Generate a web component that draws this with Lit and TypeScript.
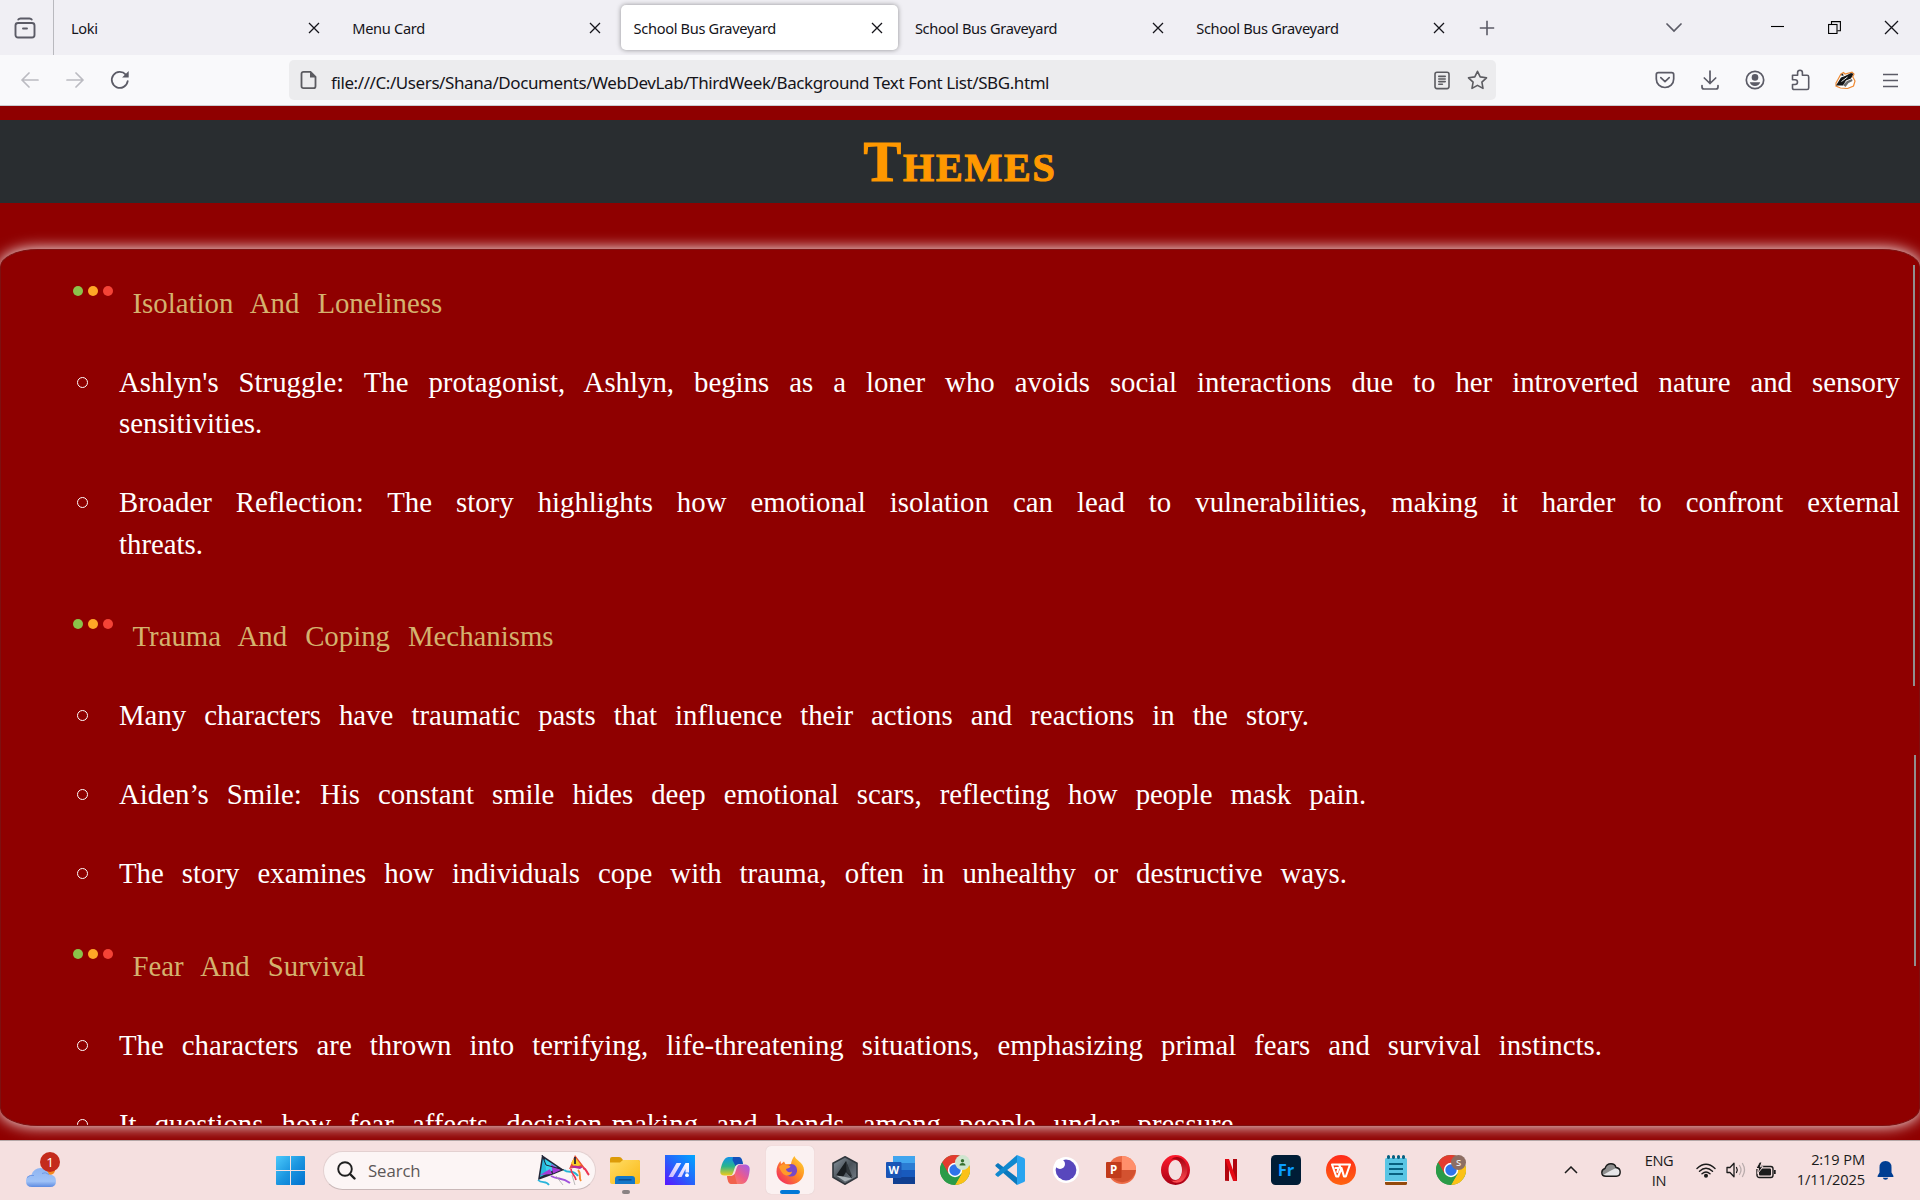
import { LitElement, html, css, svg } from "lit";
import { customElement, property } from "lit/decorators.js";

const closeX = html`<svg class="x" width="12" height="12" viewBox="0 0 12 12"><path d="M1 1l10 10M11 1L1 11" stroke="#15141a" stroke-width="1.3" fill="none"/></svg>`;

@customElement("browser-tabs")
class BrowserTabs extends LitElement {
  @property({ attribute: false }) tabs = ["Loki", "Menu Card", "School Bus Graveyard", "School Bus Graveyard", "School Bus Graveyard"];
  static styles = css`
    :host { display: flex; height: 55px; background: #f0eff4; font-family: "Noto Sans", "Open Sans", sans-serif; color: #15141a; }
    .side { width: 54px; flex: none; border-right: 1px solid #b9b9be; box-sizing: border-box; display: flex; align-items: center; padding-left: 14px; }
    .tabs { display: flex; padding-left: 4px; gap: 4.300px; align-items: center; }
    .tab { width: 277px; height: 45px; border-radius: 5px; box-sizing: border-box; display: flex; align-items: center; justify-content: space-between; padding: 0 15px 0 13px; font-size: 14.6px; letter-spacing: -0.32px; }
    .tab span { padding-top: 1px; }
    .on { background: #fff; box-shadow: 0 0 5px rgba(0,0,0,.4); }
    .plus { width: 46px; margin-left: 4px; display: flex; align-items: center; justify-content: center; padding-top: 1px; }
    .grow { flex: 1; }
    .win { width: 57px; display: flex; align-items: center; justify-content: center; padding-bottom: 1px; }
    .all { width: 45px; display: flex; align-items: center; justify-content: center; margin-right: 53px; }
  `;
  render() {
    return html`
      <div class="side"><svg width="22" height="22" viewBox="0 0 22 22" fill="none" stroke="#5b5b66" stroke-width="1.9" stroke-linecap="round"><rect x="1.5" y="6" width="19" height="14.5" rx="2.5"/><path d="M4.3 2.6Q5 1.5 6.5 1.5h9Q17 1.5 17.7 2.6M9 11.5h4"/></svg></div>
      <div class="tabs">${this.tabs.map((t, i) => html`<div class="tab ${i === 2 ? "on" : ""}"><span>${t}</span>${closeX}</div>`)}</div>
      <div class="plus"><svg width="16" height="16" viewBox="0 0 16 16"><path d="M8 .8v14.4M.8 8h14.4" stroke="#5b5b66" stroke-width="1.6"/></svg></div>
      <div class="grow"></div>
      <div class="all"><svg width="16" height="10" viewBox="0 0 16 10"><path d="M1 1l7 7 7-7" stroke="#5b5b66" stroke-width="1.7" fill="none" stroke-linecap="round"/></svg></div>
      <div class="win"><svg width="13" height="13" viewBox="0 0 13 13"><path d="M0 5.5h13" stroke="#000" stroke-width="1.1"/></svg></div>
      <div class="win"><svg width="13" height="13" viewBox="0 0 13 13" fill="none" stroke="#000" stroke-width="1.1"><rect x=".6" y="3.5" width="8.4" height="9" /><path d="M3.5 3V.6h8.9v9.2H9.4"/></svg></div>
      <div class="win"><svg width="15" height="15" viewBox="0 0 15 15"><path d="M1 1l13 13M14 1L1 14" stroke="#15141a" stroke-width="1.3"/></svg></div>`;
  }
}

@customElement("browser-toolbar")
class BrowserToolbar extends LitElement {
  static styles = css`
    :host { display: flex; height: 51px; box-sizing: border-box; border-bottom: 1px solid #cbcbcf; background: #f9f9fb; align-items: center; padding: 0 7.500px 0 7px; font-family: "Noto Sans", "Open Sans", sans-serif; }
    .cell { width: 45px; display: flex; align-items: center; justify-content: center; }
    .url { margin-left: 147px; width: 1207px; height: 40px; border-radius: 5px; background: #ececee; display: flex; align-items: center; box-sizing: border-box; padding: 0 8px 0 11px; color: #15141a; font-size: 17px; letter-spacing: -0.410px; }
    .addr { margin-left: 13px; flex: 1; padding-top: 4px; white-space: pre; }
    .star { margin-left: 17px; }
    .grow { flex: 1; }
    svg { display: block; }
  `;
  render() {
    return html`
      <div class="cell"><svg width="18" height="16" viewBox="0 0 18 16" fill="none" stroke="#bbbbc1" stroke-width="1.7" stroke-linecap="round" stroke-linejoin="round"><path d="M17 8H1M8 1L1 8l7 7"/></svg></div>
      <div class="cell"><svg width="18" height="16" viewBox="0 0 18 16" fill="none" stroke="#bbbbc1" stroke-width="1.7" stroke-linecap="round" stroke-linejoin="round"><path d="M1 8h16M10 1l7 7-7 7"/></svg></div>
      <div class="cell"><svg width="20" height="20" viewBox="0 0 20 20"><path d="M17.7 11.2A8 8 0 1 1 15.8 4.6" fill="none" stroke="#5b5b66" stroke-width="1.8" stroke-linecap="round"/><path d="M18.7 1v6.6h-6.6z" fill="#5b5b66"/></svg></div>
      <div class="url">
        <svg width="18" height="20" viewBox="0 0 18 20"><path d="M3.5 1.8h7l5 5v9.4q0 2-2 2h-10q-2 0-2-2V3.8q0-2 2-2z" fill="none" stroke="#5b5b60" stroke-width="1.8"/><path d="M10 1.2l6.2 6.2H10z" fill="#5b5b60"/></svg>
        <span class="addr">file:///C:/Users/Shana/Documents/WebDevLab/ThirdWeek/Background Text Font List/SBG.html</span>
        <svg width="16" height="19" viewBox="0 0 16 19" fill="none" stroke="#5b5b60" stroke-width="1.6" stroke-linecap="round"><rect x="1" y="1.2" width="14" height="16.4" rx="2"/><path d="M4.8 5.4h6.4M4.8 8h6.4M4.8 10.6h6.4M4.8 13.2h3.6"/></svg>
        <svg class="star" width="21" height="20" viewBox="0 0 21 20" fill="none" stroke="#5b5b60" stroke-width="1.6" stroke-linejoin="round"><path d="M10.5 1.3l2.7 5.6 6.3.9-4.6 4.3 1.1 6.3-5.5-3-5.5 3 1.1-6.3L1.500 7.800l6.300-.9z"/></svg>
      </div>
      <div class="grow"></div>
      <div class="cell"><svg width="20" height="18" viewBox="0 0 20 18" fill="none" stroke="#5b5b66" stroke-width="1.7" stroke-linecap="round" stroke-linejoin="round"><path d="M3.300 1.700h13.400q2 0 2 2V8c0 5-4 8.500-8.700 8.500S1.300 13 1.300 8V3.700q0-2 2-2z"/><path d="M5.800 6.600l4.200 4 4.200-4"/></svg></div>
      <div class="cell"><svg width="18" height="20" viewBox="0 0 18 20" fill="none" stroke="#5b5b66" stroke-width="1.700" stroke-linecap="round" stroke-linejoin="round"><path d="M9 1v12.500M3.300 8L9 13.500 14.700 8M1 15.500v1.500q0 2 2 2h12q2 0 2-2v-1.500"/></svg></div>
      <div class="cell"><svg width="20" height="20" viewBox="0 0 20 20"><circle cx="10" cy="10" r="8.700" fill="none" stroke="#5b5b66" stroke-width="1.700"/><circle cx="10" cy="7.400" r="3.300" fill="#5b5b66"/><path d="M4.800 12.300h10.400c-.6 2.500-2.700 3.600-5.200 3.600s-4.600-1.100-5.200-3.600z" fill="#5b5b66"/></svg></div>
      <div class="cell"><svg width="19" height="22" viewBox="0 0 19 22" fill="none" stroke="#5b5b66" stroke-width="1.600" stroke-linejoin="round"><path d="M6.600 6.300V3.600a2.400 2.400 0 0 1 4.800 0v2.700h4.700q1.600 0 1.600 1.600v11q0 1.600-1.600 1.600H3.100q-1.600 0-1.600-1.600v-3.400h2.600a2.400 2.400 0 0 0 0-4.800H1.500V6.300z"/></svg></div>
      <div class="cell"><svg width="21" height="18" viewBox="0 0 21 18"><path d="M1 12L6 3l2.500-1.500L10 3l7-1.800 2 2-1.300 2.600L20 10l-1.500 5-6 2.500-7-.5-4.500-2z" fill="#fff" stroke="#ef8a33" stroke-width="1.200"/><path d="M1 14.500L6 6.500l4-1.500 6-3 2.500.8L16 7.500l-5 2-3 5z" fill="#161616"/><path d="M8 14l4-4 5-2 .5 2-4 2-3 4z" fill="#6c6c6c"/><path d="M5.500 4l2.500-1.500.6 2.600z" fill="#222"/><path d="M6.500 10.500l6-4.500" stroke="#fff" stroke-width=".9"/></svg></div>
      <div class="cell"><svg width="15" height="15" viewBox="0 0 15 15"><path d="M0 1.500h15M0 7.500h15M0 13.500h15" stroke="#5b5b66" stroke-width="1.500"/></svg></div>`;
  }
}

interface Theme { title: string; points: string[]; }

@customElement("themes-page")
class ThemesPage extends LitElement {
  @property({ attribute: false }) themes: Theme[] = [
    { title: "Isolation And Loneliness", points: [
      "Ashlyn's Struggle: The protagonist, Ashlyn, begins as a loner who avoids social interactions due to her introverted nature and sensory sensitivities.",
      "Broader Reflection: The story highlights how emotional isolation can lead to vulnerabilities, making it harder to confront external threats."] },
    { title: "Trauma And Coping Mechanisms", points: [
      "Many characters have traumatic pasts that influence their actions and reactions in the story.",
      "Aiden’s Smile: His constant smile hides deep emotional scars, reflecting how people mask pain.",
      "The story examines how individuals cope with trauma, often in unhealthy or destructive ways."] },
    { title: "Fear And Survival", points: [
      "The characters are thrown into terrifying, life-threatening situations, emphasizing primal fears and survival instincts.",
      "It questions how fear affects decision-making and bonds among people under pressure."] },
  ];
  static styles = css`
    :host { display: flex; flex-direction: column; height: 1034px; background: #8f0000; overflow: hidden; position: relative; padding-top: 14px; box-sizing: border-box; font-family: "Liberation Serif", "Times New Roman", serif; }
    h1 { margin: 0; height: 83px; flex: none; background: #292d30; color: #ff9800; text-align: center; font-size: 56.500px; line-height: 85px; font-variant: small-caps; letter-spacing: 1.800px; -webkit-text-stroke: 1.100px #ff9800; }
    .box { margin-top: 46px; height: 877px; flex: none; box-sizing: border-box; border: 1px solid #7d1010; border-radius: 38px / 18px; box-shadow: 0 0 15px #fff; overflow: hidden; padding: 32px 19px 0 71.500px; font-size: 28.8px; line-height: 41.2px; word-spacing: 10.850px; background: #8f0000; }
    .theme { margin-bottom: 51.4px; }
    .head { display: flex; color: #d4b26e; margin-bottom: 38px; }
    .head b { font-weight: normal; padding-top: 1px; margin-bottom: -1px; }
    .dots { display: flex; gap: 5px; width: 60px; padding-top: 3.500px; height: 10px; }
    .dots i { width: 10px; height: 10px; border-radius: 50%; }
    .g { background: #8bc34a; } .o { background: #ffa726; } .r { background: #f44336; }
    ul { list-style: none; margin: 0; padding: 0; display: flex; flex-direction: column; gap: 37.8px; color: #fff; }
    li { display: flex; padding-left: 4.500px; }
    .mark { width: 11px; height: 11px; border: 1.2px solid #fff; border-radius: 50%; box-sizing: border-box; margin: 16px 31px 0 0; flex: none; }
    p { margin: 0 0 -1px; padding-top: 1px; flex: 1; text-align: justify; }
    .bar { position: absolute; width: 2px; background: #918e8e; }
    .inner { left: 1913px; top: 159px; height: 421px; }
    .outer { left: 1914px; top: 649px; height: 211px; }
  `;
  render() {
    return html`
      <h1>Themes</h1>
      <div class="box">
        ${this.themes.map(t => html`<section class="theme">
          <div class="head"><span class="dots"><i class="g"></i><i class="o"></i><i class="r"></i></span><b>${t.title}</b></div>
          <ul>${t.points.map(p => html`<li><span class="mark"></span><p>${p}</p></li>`)}</ul>
        </section>`)}
      </div>
      <div class="bar inner"></div><div class="bar outer"></div>`;
  }
}

const chrome = (badge: unknown) => html`<svg width="30" height="30" viewBox="0 0 30 30"><circle cx="15" cy="15" r="15" fill="#2b9b48"/><path d="M15 15L2 7.500A15 15 0 0 1 28 7.500H15z" fill="#e33b2e"/><path d="M15 7.500h13A15 15 0 0 1 15 30l6.500-11.200z" fill="#fbc116"/><path d="M2 7.500l6.500 11.300L15 7.500z" fill="#e33b2e"/><path d="M2 7.500A15 15 0 0 0 15 30l6.500-11.200H8.500z" fill="#2b9b48"/><circle cx="15" cy="15" r="7.200" fill="#fff"/><circle cx="15" cy="15" r="5.700" fill="#2f74ea"/>${badge}</svg>`;

const apps = [
  html`<svg width="30" height="27" viewBox="0 0 30 27"><defs><linearGradient id="fo" x1="0" y1="0" x2="1" y2="1"><stop stop-color="#ffdc66"/><stop offset="1" stop-color="#fbb914"/></linearGradient></defs><path d="M0 2q0-2 2-2h7q1.500 0 2.200.8L13 3h15q2 0 2 2v4H0z" fill="#dd9b08"/><path d="M0 5.500h10l3-2.500h15q2 0 2 2v20q0 2-2 2H2q-2 0-2-2z" fill="url(#fo)"/><path d="M5 27v-5q0-3 3-3h14q3 0 3 3v5z" fill="#1277c8"/><path d="M8.500 22.800h13" stroke="#0a4b8c" stroke-width="1.400"/></svg>`,
  html`<svg width="30" height="30" viewBox="0 0 30 30"><defs><linearGradient id="ma" x1="0" y1="1" x2="1" y2="0"><stop stop-color="#5a14ff"/><stop offset=".5" stop-color="#2565fb"/><stop offset="1" stop-color="#00a7ff"/></linearGradient><linearGradient id="mb" x1="0" y1="1" x2="1" y2="0"><stop stop-color="#c8b7ff"/><stop offset="1" stop-color="#fff"/></linearGradient></defs><path d="M0 0h30v30H0z" fill="url(#ma)"/><path d="M3.500 22L11.500 8h4.800L8 22zM12.500 22l8-14H24v9.500h-3.500V14L16.500 22z" fill="url(#mb)"/><circle cx="22" cy="20.200" r="1.900" fill="#fff"/></svg>`,
  html`<svg width="30" height="27" viewBox="0 0 30 27"><defs><linearGradient id="ca" x1="0" y1="0" x2="0" y2="1"><stop stop-color="#1292ea"/><stop offset=".5" stop-color="#29b58c"/><stop offset="1" stop-color="#f1cb19"/></linearGradient><linearGradient id="cb" x1="1" y1="0" x2="0" y2="1"><stop stop-color="#a05cf0"/><stop offset=".5" stop-color="#ee5d87"/><stop offset="1" stop-color="#ff9351"/></linearGradient></defs><path d="M8.500 0h10q2.500 0 3.500 3l1 4h-4q-3 0-4 3l-2 6q-.8 2.500-3 2.500H4.500Q0 18.500.3 14.500C1 9 3.500 0 8.500 0z" fill="url(#ca)"/><path d="M13 0h5.500q2.500 0 3.500 3l1 4h-4q-2.500 0-3.500 2L12.500 3z" fill="#1550ba"/><path d="M21.500 27h-10q-2.500 0-3.500-3l-1-5h4q3 0 4-3l2-6q.8-2.500 3-2.500h6Q30 8.500 29.700 12.500 28.500 27 21.500 27z" fill="url(#cb)"/><path d="M17 27h-5.500Q9 27 8 24l-1-5h4q2.500 0 3.500-2z" fill="#f1624c"/></svg>`,
  html`<svg width="29" height="29" viewBox="0 0 29 29"><defs><linearGradient id="fa" x1="1" y1="0" x2="0" y2="1"><stop stop-color="#ffe136"/><stop offset=".45" stop-color="#ff8a22"/><stop offset="1" stop-color="#f0196e"/></linearGradient></defs><path d="M18.500 0c.5 3 6 5.500 8 9 2 3 2 7.500.8 10.500C25.300 25 20.500 28.500 14.500 28.500 7 28.500.5 23 .5 15.500.5 11 2 8 4.500 5L5 8l3-2.500 1.500 2.800q3-.5 5.500-.2C15.500 5 16.500 2 18.500 0z" fill="url(#fa)"/><path d="M10 11.500l5-3.500c4 0 6.500 3.500 6 7.500-.5 3.500-3.500 5.500-7 5-3-.5-5.500-3-5-6z" fill="#7849c8"/><path d="M3 11c3-4 6-3 7.500-1.500l4 .5c-.5 2-2.500 2-4.500 3 0 3 4 4 6 2.500 0 3-4 5-7 3.500C6 18 4.500 14 3 11z" fill="#ff9a2a"/></svg>`,
  html`<svg width="26" height="29" viewBox="0 0 26 29"><defs><linearGradient id="ar" x1="0" y1="0" x2="1" y2="1"><stop stop-color="#8d98a2"/><stop offset=".5" stop-color="#4a525a"/><stop offset="1" stop-color="#7c858e"/></linearGradient></defs><path d="M13 .8l12 6.500v14L13 28.200 1 21.300v-14z" fill="url(#ar)" stroke="#30363c" stroke-width="1.600"/><path d="M14 5L4 19.500l7 1.500 3-5 6 6.500z" fill="#191d21"/><path d="M14 5l6.500 16-6-5z" fill="#30363b"/><path d="M4 19.500l9 6 7-3-9-2z" fill="#a8b0b6"/></svg>`,
  html`<svg width="29" height="28" viewBox="0 0 29 28"><path d="M7 0h22v7H7z" fill="#41a5ee"/><path d="M7 7h22v7H7z" fill="#2b7cd3"/><path d="M7 14h22v7H7z" fill="#185abd"/><path d="M7 21h22v7H7z" fill="#103f91"/><rect y="6" width="15.500" height="16" rx="1" fill="#1a55b6"/><text x="7.700" y="18" font-family="Open Sans, sans-serif" font-weight="700" font-size="11" text-anchor="middle" fill="#fff">W</text></svg>`,
  chrome(svg`<circle cx="22.500" cy="7.500" r="7.500" fill="#cfe5cf"/><circle cx="22.500" cy="5.800" r="1.700" fill="#36702f"/><path d="M19.500 10.500q0-2.500 3-2.500t3 2.500z" fill="#36702f"/>`),
  html`<svg width="30" height="30" viewBox="0 0 30 30"><path d="M1 9.500l2-1.500L22 22.500V30L.8 11.500Q-.3 10.500 1 9.500z" fill="#0a78bd"/><path d="M1 20.500l2 1.500L22 7.500V0L.8 18.500q-1.100 1 .2 2z" fill="#1089cf"/><path d="M22 0l7 3q1 .5 1 1.500v21q0 1-1 1.500l-7 3z" fill="#29a4f0"/></svg>`,
  html`<svg width="26" height="26" viewBox="0 0 26 26"><circle cx="13" cy="13" r="13" fill="#fff"/><circle cx="13" cy="13" r="10.400" fill="#5847bd"/><circle cx="7" cy="7" r="5" fill="#fff"/></svg>`,
  html`<svg width="30" height="28" viewBox="0 0 30 28"><circle cx="16" cy="14" r="14" fill="#ed6c47"/><path d="M16 0a14 14 0 0 1 14 14H16z" fill="#ff8f6b"/><path d="M2.500 14H30a14 14 0 0 1-27 3z" fill="#d35230"/><rect y="6" width="15.500" height="16" rx="1" fill="#c13b1b"/><text x="7.700" y="18" font-family="Open Sans, sans-serif" font-weight="700" font-size="11.500" text-anchor="middle" fill="#fff">P</text></svg>`,
  html`<svg width="29" height="30" viewBox="0 0 29 30"><defs><linearGradient id="op" x1="0" y1="0" x2="0" y2="1"><stop stop-color="#ff1b2d"/><stop offset="1" stop-color="#a70014"/></linearGradient><linearGradient id="oq" x1="0" y1="0" x2="0" y2="1"><stop stop-color="#a3000f"/><stop offset="1" stop-color="#ff4e52"/></linearGradient></defs><path fill-rule="evenodd" d="M14.500 0a14.500 15 0 1 0 0 30 14.500 15 0 1 0 0-30zm0 5c4 0 6.500 4.500 6.500 10s-2.500 10-6.500 10S7.500 20.500 7.500 15s3-10 7-10z" fill="url(#op)"/><path d="M10 4.800C14 .5 19 2 22 4.500a15 15 0 0 1 0 21c-4 3-9 3-12-.3 6.500 2.500 11.300-3 11.300-10.200S16.500 2.300 10 4.800z" fill="url(#oq)"/></svg>`,
  html`<svg width="12" height="22" viewBox="0 0 12 22"><path d="M0 0h4v22l-4-.3zM8 0h4v22l-4-.3z" fill="#b1060f"/><path d="M0 0h4l8 22-4-.3z" fill="#e50914"/></svg>`,
  html`<svg width="30" height="30" viewBox="0 0 30 30"><rect width="30" height="30" rx="4.500" fill="#001d36"/><text x="15" y="21" font-family="Open Sans, sans-serif" font-weight="700" font-size="16.500" text-anchor="middle" fill="#0a9dff">Fr</text></svg>`,
  html`<svg width="30" height="30" viewBox="0 0 30 30"><defs><linearGradient id="wp" x1="0" y1="0" x2="0" y2="1"><stop stop-color="#ff2a1a"/><stop offset="1" stop-color="#ff6410"/></linearGradient></defs><circle cx="15" cy="15" r="15" fill="url(#wp)"/><path d="M14.500 13l-1.500-3.500H6l4.200 12h2L15.500 13l2.500 8.500h1.800L24 9.500H13.500M9.500 13h3l-1.200 4" fill="none" stroke="#fff" stroke-width="2.100" stroke-linejoin="round" stroke-linecap="round"/></svg>`,
  html`<svg width="22" height="30" viewBox="0 0 22 30"><path d="M0 25h22v3.500q0 1.500-1.500 1.500h-19Q0 30 0 28.500z" fill="#944a0c"/><path d="M0 24h22v3H0z" fill="#f3f3f3"/><path d="M0 4.500Q0 3 1.500 3h19Q22 3 22 4.500V26H0z" fill="#5ac5e4"/><path d="M4 9h14M4 14h14M4 19h14" stroke="#086080" stroke-width="2"/><path d="M3.500 1.500v1M8.500 1.500v1M13.500 1.500v1M18.500 1.500v1" stroke="#086080" stroke-width="3" stroke-linecap="round"/></svg>`,
  chrome(svg`<circle cx="22.500" cy="7.500" r="7.500" fill="#8d6e63"/><text x="22.500" y="11" font-family="Open Sans, sans-serif" font-size="9.500" font-weight="600" text-anchor="middle" fill="#eee">S</text>`),
];

@customElement("task-bar")
class TaskBar extends LitElement {
  static styles = css`
    :host { display: flex; height: 60px; box-sizing: border-box; border-top: 1px solid #b5a8a8; padding-bottom: 1px; background: #f5e0e0; align-items: center; font-family: "Open Sans", "Noto Sans", sans-serif; color: #1b1b1b; }
    svg { display: block; }
    .weather { width: 276px; padding-left: 26px; box-sizing: border-box; flex: none; }
    .pill { margin-left: 18px; width: 273px; height: 39px; border-radius: 20px; background: #fcf5f5; border: 1px solid #e3d0d0; border-bottom-color: #c9b8b8; box-sizing: border-box; display: flex; align-items: center; padding: 0 5px 0 13px; }
    .pill span { margin-left: 12px; flex: 1; font-size: 16.8px; letter-spacing: -0.1px; color: #5c5757; }
    .apps { display: flex; margin-left: 1.500px; }
    .app { width: 55.070px; display: flex; align-items: center; justify-content: center; height: 58px; position: relative; }
    .act { position: absolute; left: 3.500px; top: 5px; width: 48px; height: 48px; border-radius: 5px; background: #fbf1f1; box-shadow: 0 0 1px #d0bcbc; }
    .app svg { position: relative; }
    .run { position: absolute; bottom: 5px; left: 24px; width: 8px; height: 4px; border-radius: 2px; background: #8a8283; }
    .cur { position: absolute; bottom: 5px; left: 17.500px; width: 20px; height: 4px; border-radius: 2px; background: #0078d7; }
    .tray { margin-left: auto; display: flex; align-items: center; padding-right: 26.500px; }
    .up { margin-right: 23px; } .cloud { margin-right: 22px; }
    .lang { width: 32px; text-align: center; font-size: 14.600px; line-height: 20px; letter-spacing: -0.4px; margin: -1px 21px 0 0; }
    .wifi { margin-right: 10px; } .vol { margin-right: 10px; }
    .time { width: 89px; text-align: right; font-size: 14.600px; line-height: 20px; letter-spacing: -0.100px; margin: -2px 11.500px 0 0; white-space: nowrap; }
  `;
  render() {
    return html`
      <div class="weather"><svg width="36" height="36" viewBox="0 0 36 36"><defs><linearGradient id="cl" x1="0" y1="0" x2="0" y2="1"><stop stop-color="#8fb4f0"/><stop offset=".7" stop-color="#9fc2f7"/><stop offset="1" stop-color="#5d8ae0"/></linearGradient></defs><g transform="translate(0 -3)"><circle cx="24" cy="21" r="5" fill="#f58a1e"/><path d="M6 38q-6 0-6-6 0-5.500 5.500-6.300Q8 19 14.500 19q6 0 8.500 6.500 7 0 7 6.500 0 6-6 6z" fill="url(#cl)"/><path d="M1 28.500q3-3 7-2M16 24.500q3-2 7 1" stroke="#7199e4" fill="none"/></g><circle cx="24" cy="10" r="10" fill="#c42b1c"/><text x="24" y="15" font-family="Open Sans, sans-serif" font-size="13.500" text-anchor="middle" fill="#fff">1</text></svg></div>
      <svg width="29" height="29" viewBox="0 0 29 29"><defs><linearGradient id="wl" gradientUnits="userSpaceOnUse" x1="0" y1="0" x2="29" y2="29"><stop stop-color="#4cc9fb"/><stop offset=".5" stop-color="#1b96e0"/><stop offset="1" stop-color="#0070cf"/></linearGradient></defs><path d="M1 0h13v14H0V1q0-1 1-1zM15 0h13q1 0 1 1v13H15zM0 15h14v14H1q-1 0-1-1zM15 15h14v13q0 1-1 1H15z" fill="url(#wl)"/></svg>
      <div class="pill">
        <svg width="19" height="19" viewBox="0 0 19 19" fill="none" stroke="#1f1f1f" stroke-linecap="round"><circle cx="8" cy="8" r="6.800" stroke-width="1.900"/><path d="M13 13l4.500 4.500" stroke-width="2.400"/></svg>
        <span>Search</span>
        <svg width="53" height="32" viewBox="0 0 53 32"><path d="M5 1L27 16 16 20.500 1 26z" fill="#222638"/><path d="M6 4l7 8-4 8-6 3z" fill="#27b9dc"/><path d="M8 5l12 8-8 6-3-3z" fill="#37d4ee"/><path d="M14 10l10 6-8 3.500zM3 21l10-6 2 5z" fill="#a63bd8"/><path d="M5 1l4 10 18 5" stroke="#222638" stroke-width="1" fill="none"/><path d="M1 26c4 4 8 0 11 5" stroke="#28b4da" stroke-width="1.700" fill="none"/><path d="M14 22c7 4 11 1 19 7" stroke="#a050dc" stroke-width="2" fill="none"/><path d="M27 16c5 4 9-1 14 6" stroke="#25b5d5" stroke-width="2" fill="none"/><path d="M19 22l7 9M35 21l3 10" stroke="#aaa" stroke-width=".8"/><path d="M38 1l10 13-7-1-9 2z" fill="#eb4d35"/><path d="M38 3l6 8-6 2-4-4z" fill="#f9cd28"/><path d="M38 3v7" stroke="#2a2438" stroke-width="1.800"/><path d="M33 13l5-1.500 8 1.500-3 2z" fill="#b52aa2"/><path d="M46 14c4 1 3 4 6 7" stroke="#ec3553" stroke-width="2" fill="none"/><path d="M41 16c4 4 0 7 3 11" stroke="#f58b2c" stroke-width="2" fill="none"/><path d="M34 15c0 5 4 6 5 11" stroke="#ec3553" stroke-width="1.700" fill="none"/></svg>
      </div>
      <div class="apps">${apps.map((a, i) => html`<div class="app">${i === 3 ? html`<div class="act"></div>` : ""}${a}${i === 0 ? html`<div class="run"></div>` : ""}${i === 3 ? html`<div class="cur"></div>` : ""}</div>`)}</div>
      <div class="tray">
        <svg class="up" width="14" height="8" viewBox="0 0 14 8"><path d="M1 7l6-6 6 6" fill="none" stroke="#1b1b1b" stroke-width="1.500"/></svg>
        <svg class="cloud" width="20" height="14" viewBox="0 0 20 14"><path d="M5 13.200q-4.200 0-4.200-3.800 0-3 3.200-3.900Q5.500.8 10 .8q4 0 5 3.700 4.200.5 4.200 4.500 0 4.200-4 4.200z" fill="#8e8e8e"/><path d="M2 12l7-4 6-3 3.500 2 .5 3-2.500 3H5z" fill="#e6e6e8"/><path d="M5 13.200q-4.200 0-4.200-3.800 0-3 3.200-3.900Q5.500.8 10 .8q4 0 5 3.700 4.200.5 4.200 4.500 0 4.200-4 4.200z" fill="none" stroke="#1b1b1b" stroke-width="1.400"/></svg>
        <div class="lang">ENG<br>IN</div>
        <svg class="wifi" width="20" height="15" viewBox="0 0 20 15" fill="none" stroke="#1b1b1b" stroke-width="1.400" stroke-linecap="round"><path d="M1 5.500q9-8.500 18 0M3.500 8.200q6.500-6 13 0M6 10.700q4-3.600 8 0"/><circle cx="10" cy="12.800" r="1.300" fill="#1b1b1b"/></svg>
        <svg class="vol" width="20" height="16" viewBox="0 0 20 16" fill="none" stroke-width="1.300" stroke-linecap="round"><path d="M1 5.500h3L8 1.200v13.600L4 10.500H1z" stroke="#1b1b1b" stroke-linejoin="round"/><path d="M10.500 5.500q1.600 2.500 0 5" stroke="#1b1b1b"/><path d="M13.500 3.500q3 4.500 0 9M16.500 1.500q4 6.500 0 13" stroke="#b9acac"/></svg>
        <svg width="20" height="17" viewBox="0 0 20 17"><rect x="1" y="4.500" width="16" height="11" rx="2.200" fill="none" stroke="#1b1b1b" stroke-width="1.400"/><rect x="3" y="6.500" width="12" height="7" rx="1" fill="#1b1b1b"/><path d="M18 8h1.700v4H18z" fill="#1b1b1b"/><path d="M3.500 0L0 6.500h2.500L1.600 11.500 7 4.800H4.300L6 0z" fill="#1b1b1b" stroke="#f5e0e0" stroke-width="1"/></svg>
        <div class="time">2:19 PM<br>1/11/2025</div>
        <svg width="17" height="19" viewBox="0 0 17 19"><path d="M8.500 0q6 0 6 6.500v5L16.500 15q.3 1-.7 1H1.200q-1 0-.7-1l2-3.500v-5Q2.500 0 8.500 0zM5.800 16.800h5.400q-.5 2-2.700 2t-2.700-2z" fill="#003e92"/></svg>
      </div>`;
  }
}

@customElement("app-root")
class AppRoot extends LitElement {
  static styles = css`:host { display: flex; flex-direction: column; width: 1920px; height: 1200px; overflow: hidden; }`;
  render() {
    return html`<browser-tabs></browser-tabs><browser-toolbar></browser-toolbar><themes-page></themes-page><task-bar></task-bar>`;
  }
}
